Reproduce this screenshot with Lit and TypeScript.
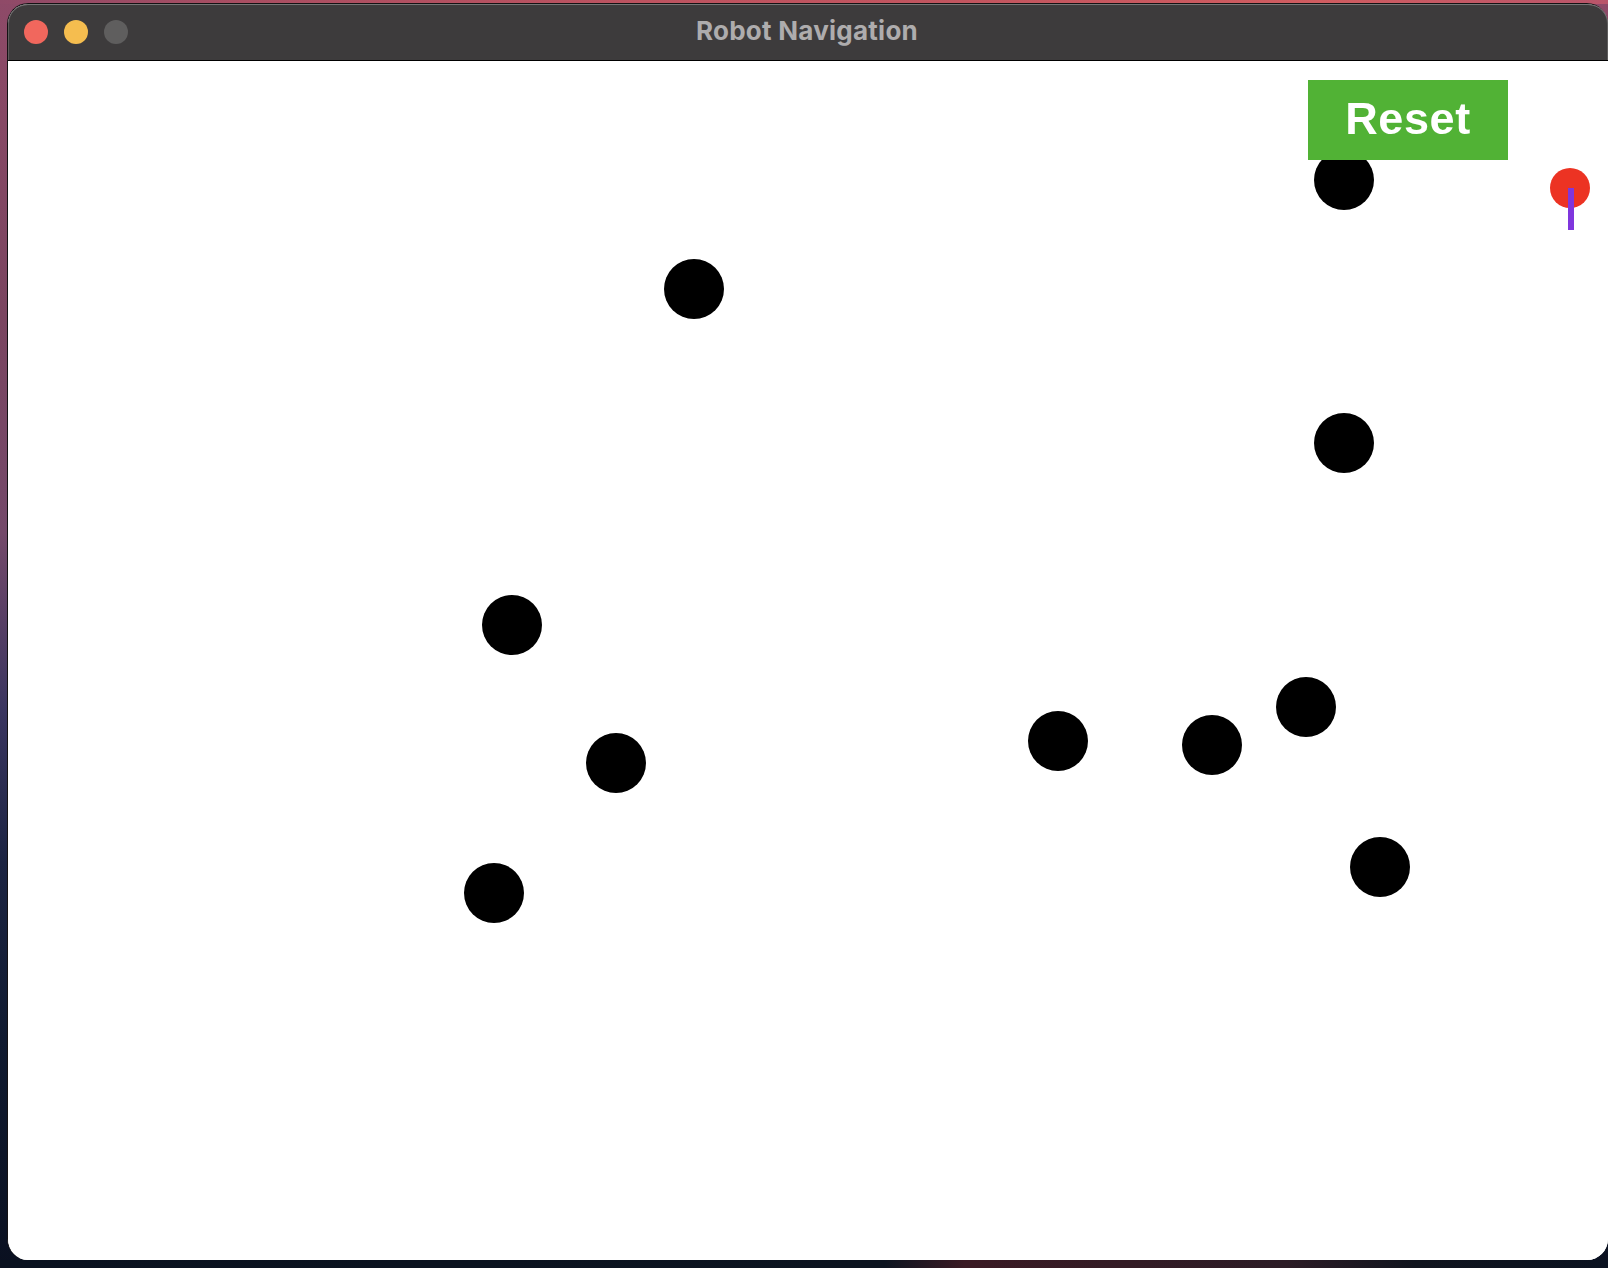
import { LitElement, html, css } from "lit";
import { customElement } from "lit/decorators.js";

const OBSTACLES = [
  [694, 289], [1344, 180], [1344, 443], [512, 625], [616, 763],
  [494, 893], [1058, 741], [1212, 745], [1306, 707], [1380, 867],
];

@customElement("app-root")
export class AppRoot extends LitElement {
  static styles = css`
    :host {
      display: block;
      width: 1608px;
      height: 1268px;
      overflow: hidden;
      box-sizing: border-box;
      padding: 3px 0 8px 7px;
      background:
        linear-gradient(90deg, #8f4a68 0%, #a94e62 15%, #bd5360 40%, #c2555f 60%, #d05c60 82%, #b9556a 100%) top / 100% 4px no-repeat,
        linear-gradient(90deg, #0a1220 0%, #0c1420 55%, #3a1a24 60%, #2c1c26 80%, #10141e 88%, #0a1220 100%) bottom / 100% 8px no-repeat,
        linear-gradient(180deg, #8e4a68 0%, #7a4560 25%, #74496a 42%, #3a3560 56%, #1c2442 68%, #101a30 82%, #0a1020 100%);
    }
    .window {
      height: 100%;
      box-sizing: border-box;
      display: flex;
      flex-direction: column;
      overflow: hidden;
      border-radius: 21px;
      border: solid #141214;
      border-width: 1px 0 0 1px;
      background: #fff;
    }
    .titlebar {
      flex: none;
      height: 57px;
      box-sizing: border-box;
      position: relative;
      display: flex;
      align-items: center;
      justify-content: center;
      padding-bottom: 3px;
      background: #3d3b3c;
      border-bottom: 1px solid #000;
      border-radius: 20px 20px 0 0;
      box-shadow: inset 0 1px 0 #777676, inset 1px 0 0 #5e5d5d, inset -1px 0 0 #5e5d5d;
    }
    .lights {
      position: absolute;
      left: 16px;
      top: 16px;
      display: flex;
      gap: 16px;
    }
    .light {
      width: 24px;
      height: 24px;
      border-radius: 50%;
    }
    .close { background: #f1675d; }
    .min { background: #f5bd4f; }
    .max { background: #5f5e5e; }
    .title {
      font: 700 26px/1 Inter, "Liberation Sans", sans-serif;
      letter-spacing: 0.25px;
      color: #aeacad;
      margin-right: 2px;
    }
    .canvas {
      flex: 1;
      position: relative;
      background: #fff;
    }
    .obstacle {
      position: absolute;
      width: 60px;
      height: 60px;
      margin: -30px 0 0 -30px;
      border-radius: 50%;
      background: #000;
    }
    .reset {
      position: absolute;
      left: 1300px;
      top: 19px;
      width: 200px;
      height: 80px;
      box-sizing: border-box;
      padding-bottom: 3px;
      display: flex;
      align-items: center;
      justify-content: center;
      background: #51b235;
      color: #fff;
      font: 700 45px/1 "Liberation Sans", sans-serif;
      letter-spacing: 0.6px;
    }
    .label {
      filter: blur(0.5px);
    }
    .robot {
      position: absolute;
      left: 1542px;
      top: 107px;
      width: 40px;
      height: 40px;
      border-radius: 50%;
      background: #ec3323;
    }
    .heading {
      position: absolute;
      left: 1560px;
      top: 127px;
      width: 6px;
      height: 42px;
      background: #7f36dd;
    }
  `;

  render() {
    return html`
      <div class="window">
        <header class="titlebar">
          <div class="lights">
            <span class="light close"></span>
            <span class="light min"></span>
            <span class="light max"></span>
          </div>
          <div class="title">Robot Navigation</div>
        </header>
        <main class="canvas">
          ${OBSTACLES.map(
            ([x, y]) => html`<div class="obstacle" style="left:${x - 8}px;top:${y - 61}px"></div>`
          )}
          <div class="reset"><span class="label">Reset</span></div>
          <div class="robot"></div>
          <div class="heading"></div>
        </main>
      </div>
    `;
  }
}
